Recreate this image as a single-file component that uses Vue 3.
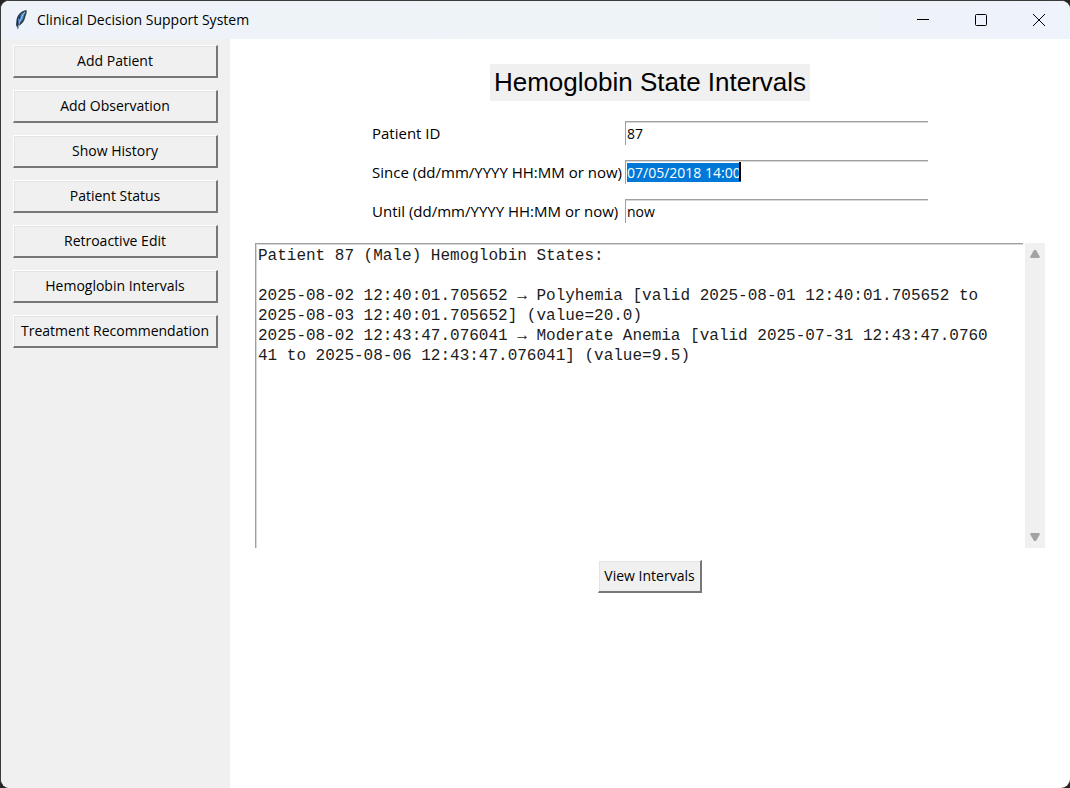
<script setup>
import { onMounted, ref } from 'vue'

const actions = [
  'Add Patient',
  'Add Observation',
  'Show History',
  'Patient Status',
  'Retroactive Edit',
  'Hemoglobin Intervals',
  'Treatment Recommendation',
]

const patientId = ref('87')
const since = ref('07/05/2018 14:00')
const until = ref('now')
const sinceInput = ref(null)

const result = [
  'Patient 87 (Male) Hemoglobin States:',
  '',
  '2025-08-02 12:40:01.705652 → Polyhemia [valid 2025-08-01 12:40:01.705652 to',
  '2025-08-03 12:40:01.705652] (value=20.0)',
  '2025-08-02 12:43:47.076041 → Moderate Anemia [valid 2025-07-31 12:43:47.0760',
  '41 to 2025-08-06 12:43:47.076041] (value=9.5)',
].join('\n')

onMounted(() => {
  sinceInput.value.focus()
  sinceInput.value.select()
})
</script>

<template>
  <div class="window">
    <header class="titlebar">
      <svg class="feather" viewBox="0 0 16 22" aria-hidden="true">
        <path d="M13.500 1 C8 2 4 6 3.500 11 L3 16 L5 20.500 L6 17 C10 14 12 11 12.500 7 C13.500 5 14 3 13.500 1 Z" fill="#303b49" />
        <path d="M12.500 2.500 C8.500 4 5.500 7 5 11.500 L5 15 C9 12.500 10.500 10 11 6.500 Z" fill="#4788d2" />
        <path d="M12 3 C9 6.500 7 11 5 19" fill="none" stroke="#9cc5ef" stroke-width="1" />
        <path d="M7 6.500 L6.500 10 M4.500 11 L5 16" fill="none" stroke="#1c222b" stroke-width="1" />
      </svg>
      <h1 class="caption">Clinical Decision Support System</h1>
      <div class="controls">
        <button type="button" class="control" aria-label="Minimize">
          <svg viewBox="0 0 14 14"><path d="M1 6.500 H13" /></svg>
        </button>
        <button type="button" class="control" aria-label="Maximize">
          <svg viewBox="0 0 14 14"><rect x="1.500" y="1.500" width="11" height="11" rx="1" /></svg>
        </button>
        <button type="button" class="control" aria-label="Close">
          <svg viewBox="0 0 14 14"><path d="M1 1 L13 13 M13 1 L1 13" /></svg>
        </button>
      </div>
    </header>

    <div class="body">
      <nav class="sidebar">
        <button v-for="action in actions" :key="action" type="button" class="raised">{{ action }}</button>
      </nav>

      <main class="content">
        <h2 class="heading">Hemoglobin State Intervals</h2>

        <form class="fields" @submit.prevent>
          <label for="patient">Patient ID</label>
          <div class="entry"><input id="patient" v-model="patientId" type="text" /></div>
          <label for="since">Since (dd/mm/YYYY HH:MM or now)</label>
          <div class="entry">
            <input id="since" ref="sinceInput" v-model="since" type="text" />
            <span class="caret"></span>
          </div>
          <label for="until">Until (dd/mm/YYYY HH:MM or now)</label>
          <div class="entry"><input id="until" v-model="until" type="text" /></div>
        </form>

        <div class="output">
          <textarea class="log" aria-label="Hemoglobin states" readonly :value="result"></textarea>
          <div class="scrollbar">
            <button type="button" aria-label="Scroll up">
              <svg viewBox="0 0 12 8"><path d="M5 0 H7 L11 7 L10 8 H2 L1 7 Z" /></svg>
            </button>
            <button type="button" aria-label="Scroll down">
              <svg viewBox="0 0 12 8"><path d="M5 8 H7 L11 1 L10 0 H2 L1 1 Z" /></svg>
            </button>
          </div>
        </div>

        <button type="button" class="raised view">View Intervals</button>
      </main>
    </div>
  </div>
</template>

<style>
body {
  margin: 0;
  background: #252525;
}
</style>

<style scoped>
* {
  box-sizing: border-box;
}
.window {
  display: flex;
  flex-direction: column;
  min-height: 100vh;
  overflow: hidden;
  border: solid #3a3a3a;
  border-width: 1px 0 0 1px;
  border-radius: 9px;
  background: #fff;
  color: #000;
  font: 14px/20px "Open Sans", "Noto Sans", sans-serif;
}
button,
input,
textarea {
  margin: 0;
  color: inherit;
  font: inherit;
}
.titlebar {
  display: flex;
  align-items: center;
  height: 38px;
  padding: 0 2px 0 12px;
  background: linear-gradient(90deg, #edf3f9, #eef3f7 70%, #eef3fc);
}
.feather {
  width: 16px;
  height: 22px;
}
.caption {
  flex: 1;
  margin: 0 0 0 8px;
  font-size: 14px;
  font-weight: 400;
}
.controls {
  display: flex;
  align-self: stretch;
}
.control {
  display: grid;
  place-items: center;
  width: 58px;
  padding: 0;
  border: 0;
  background: none;
}
.control svg {
  width: 14px;
  height: 14px;
  fill: none;
  stroke: #000;
}
.body {
  display: flex;
  flex: 1;
}
.sidebar {
  display: flex;
  flex-direction: column;
  gap: 12px;
  width: 229px;
  padding: 6px 12px;
  background: #f0f0f0;
}
.raised {
  height: 33px;
  padding: 0;
  border: solid;
  border-width: 1px 2px 2px 1px;
  border-color: #fff #777 #777 #fff;
  background: #f0f0f0;
  box-shadow: inset 1px 1px #e3e3e3;
  white-space: nowrap;
}
.content {
  display: flex;
  flex: 1;
  flex-direction: column;
  align-items: center;
  min-width: 0;
  padding: 25px;
}
.heading {
  margin: 0;
  padding: 0 4px;
  background: #f0f0f0;
  font: 400 26px/37px "Liberation Sans", Arial, sans-serif;
}
.fields {
  display: grid;
  grid-template-columns: 253px 303px;
  row-gap: 15px;
  margin-top: 20px;
}
.fields label {
  font-size: 15px;
  line-height: 24px;
  white-space: nowrap;
}
.entry {
  position: relative;
  height: 24px;
  border: solid #a0a0a0;
  border-width: 1px 0 0 1px;
  box-shadow: inset 0 1px #d8d8d8;
}
.entry input {
  display: block;
  width: 100%;
  height: 22px;
  padding: 0 0 0 1px;
  border: 0;
  outline: 0;
  background: none;
}
.entry input::selection {
  background: #0078d7;
  color: #fff;
}
.caret {
  position: absolute;
  top: 1px;
  left: 113px;
  width: 2px;
  height: 19px;
  background: #000;
}
.output {
  display: flex;
  align-self: stretch;
  height: 305px;
  margin-top: 20px;
}
.log {
  flex: 1;
  min-width: 0;
  padding: 2px;
  border: solid #a0a0a0;
  border-width: 1px 0 0 1px;
  outline: 0;
  resize: none;
  overflow: hidden;
  background: #fff;
  box-shadow: inset 1px 1px #d8d8d8;
  color: #1c1c1c;
  font: 16px/20px "Liberation Mono", "Courier New", monospace;
  white-space: pre;
}
.scrollbar {
  display: flex;
  flex-direction: column;
  justify-content: space-between;
  width: 20px;
  margin-left: 2px;
  background: #f0f0f0;
}
.scrollbar button {
  display: grid;
  place-items: center;
  height: 22px;
  padding: 0;
  border: 0;
  background: none;
}
.scrollbar svg {
  width: 12px;
  height: 8px;
  fill: #a3a3a3;
}
.view {
  width: 104px;
  margin-top: 12px;
}
</style>
